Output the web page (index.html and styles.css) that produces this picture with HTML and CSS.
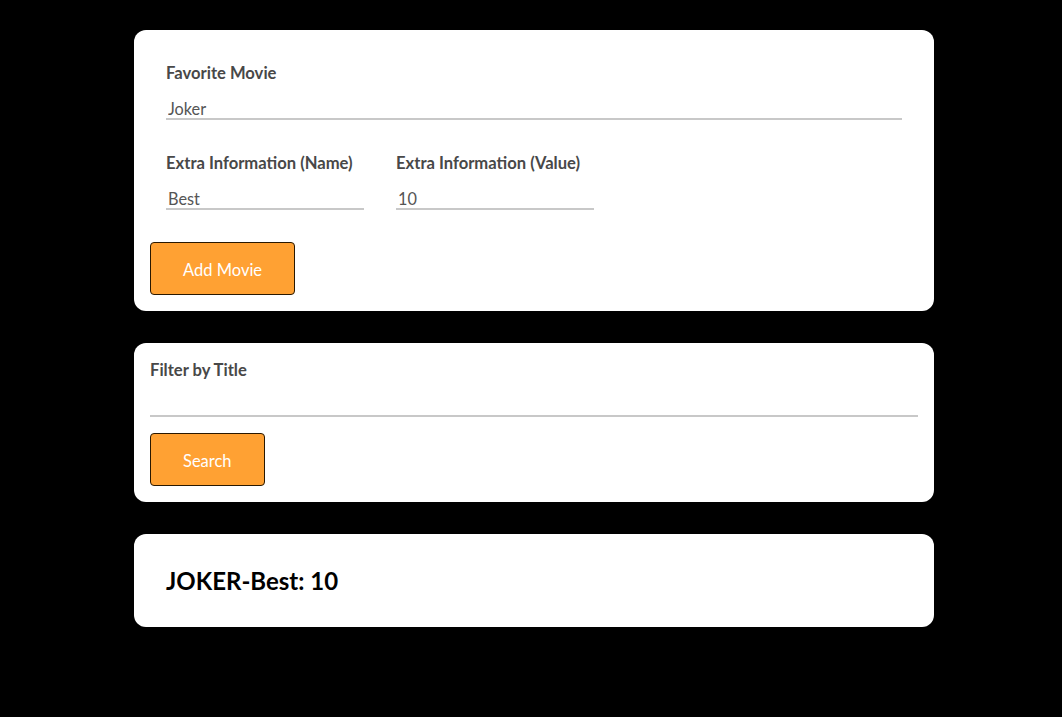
FILE: index.html
```html
<!DOCTYPE html>
<html>
<head>
<meta charset="utf-8">
<link rel="stylesheet" href="styles.css">
</head>
<body>
<main class="page">
  <section class="card">
    <div class="fields">
      <div class="field field-wide">
        <label class="label">Favorite Movie</label>
        <input class="input" type="text" value="Joker">
      </div>
      <div class="field field-small">
        <label class="label">Extra Information (Name)</label>
        <input class="input" type="text" value="Best">
      </div>
      <div class="field field-small">
        <label class="label">Extra Information (Value)</label>
        <input class="input" type="text" value="10">
      </div>
    </div>
    <button class="btn">Add Movie</button>
  </section>

  <section class="card">
    <div class="field field-wide">
      <label class="label">Filter by Title</label>
      <input class="input" type="text" value="">
    </div>
    <button class="btn">Search</button>
  </section>

  <section class="card card-result">
    <h2 class="result">JOKER-Best: 10</h2>
  </section>
</main>
</body>
</html>
```

FILE: styles.css
```css
* { box-sizing: border-box; }
html, body { margin: 0; padding: 0; background: #000; }
body { font-family: Lato, "Open Sans", sans-serif; }
.page {
  width: 800px;
  margin-left: 134px;
  padding-top: 30px;
  display: flex;
  flex-direction: column;
  gap: 32px;
}
.card {
  background: #fff;
  border-radius: 12px;
  padding: 16px;
}
.fields {
  display: flex;
  flex-wrap: wrap;
  column-gap: 32px;
  row-gap: 32px;
  padding: 16px;
}
.field { display: flex; flex-direction: column; }
.field-wide { width: 100%; }
.field-small { width: 198px; }
.label {
  font-weight: 700;
  font-size: 16.6px;
  line-height: 20px;
  color: #484848;
  padding-top: 1px;
  margin-bottom: 6px;
}
.input {
  font-family: Lato, "Open Sans", sans-serif;
  font-size: 16.3px;
  line-height: 19px;
  color: #555;
  border: none;
  border-bottom: 2px solid #c8c8c8;
  padding: 10px 2px 0;
  outline: none;
  background: transparent;
  width: 100%;
}
.btn {
  display: block;
  margin-top: 16px;
  font-family: Lato, "Open Sans", sans-serif;
  font-size: 16.5px;
  line-height: 19px;
  color: #fff;
  background: #ffa133;
  border: 1px solid #2a1800;
  border-radius: 4px;
  padding: 18px 32px 14px;
}
.card-result { padding: 32px; }
.result {
  margin: 0;
  font-size: 24px;
  line-height: 29px;
  font-weight: 700;
  color: #000;
}
```
